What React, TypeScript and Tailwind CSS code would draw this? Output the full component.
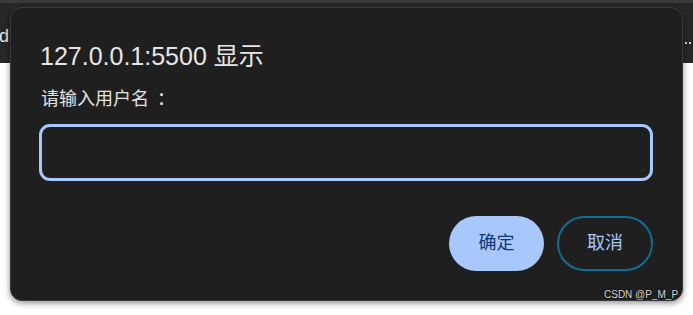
import React from "react";

const font = '"Liberation Sans", "Noto Sans CJK SC", sans-serif';

function BrowserBackdrop() {
  return (
    <div className="flex flex-col h-full">
      <div className="h-[3px] bg-[#3a3a3a]" />
      <div className="h-[60px] bg-[#272727] flex items-center justify-between">
        <span className="text-[18px] leading-none text-[#e8e8e8] -ml-[1px] mt-[6px]">d</span>
        <span className="flex gap-[2px] mr-[2px] mt-[20px]">
          <span className="w-[2px] h-[2px] bg-[#cfcfcf]" />
          <span className="w-[2px] h-[2px] bg-[#cfcfcf]" />
          <span className="w-[2px] h-[2px] bg-[#cfcfcf]" />
        </span>
      </div>
      <div className="flex-1 bg-white" />
    </div>
  );
}

export default function App() {
  return (
    <div className="relative w-[693px] h-[315px] overflow-hidden" style={{ fontFamily: font }}>
      <BrowserBackdrop />

      <div className="absolute left-[10px] top-[7px] w-[673px] h-[294px] rounded-[12px] bg-[#1f1f1f] border border-[#3a3a3a] shadow-[0_2px_6px_rgba(0,0,0,0.45)] pl-[28px] pr-[29px] pt-[32px] flex flex-col">
        <div className="pl-[1px] text-[25px] leading-[32px] text-[#e6e6e6]">127.0.0.1:5500 显示</div>
        <div className="pl-[2px] mt-[15px] text-[18px] leading-[24px] text-[#e3e3e3]">
          请输入用户名<span className="pl-[8px]">：</span>
        </div>
        <input
          className="mt-[13px] h-[57px] w-full rounded-[11px] border-[3px] border-[#a8c7fa] bg-[#1f1f1f] outline-none px-3 text-[18px] text-[#e3e3e3]"
          autoFocus
        />
        <div className="mt-[35px] flex justify-end gap-[13px]">
          <button className="w-[95px] h-[55px] rounded-full bg-[#a8c7fa] text-[18px] text-[#0b3a7a]">
            确定
          </button>
          <button className="w-[96px] h-[55px] rounded-full border-2 border-[#106d90] text-[18px] text-[#a8c7fa]">
            取消
          </button>
        </div>
      </div>

      <div className="absolute left-[604px] top-[289px] text-[10px] leading-[12px] text-[#d6d6d6] [text-shadow:0_0_2px_#000]">
        CSDN @P_M_P
      </div>
    </div>
  );
}
